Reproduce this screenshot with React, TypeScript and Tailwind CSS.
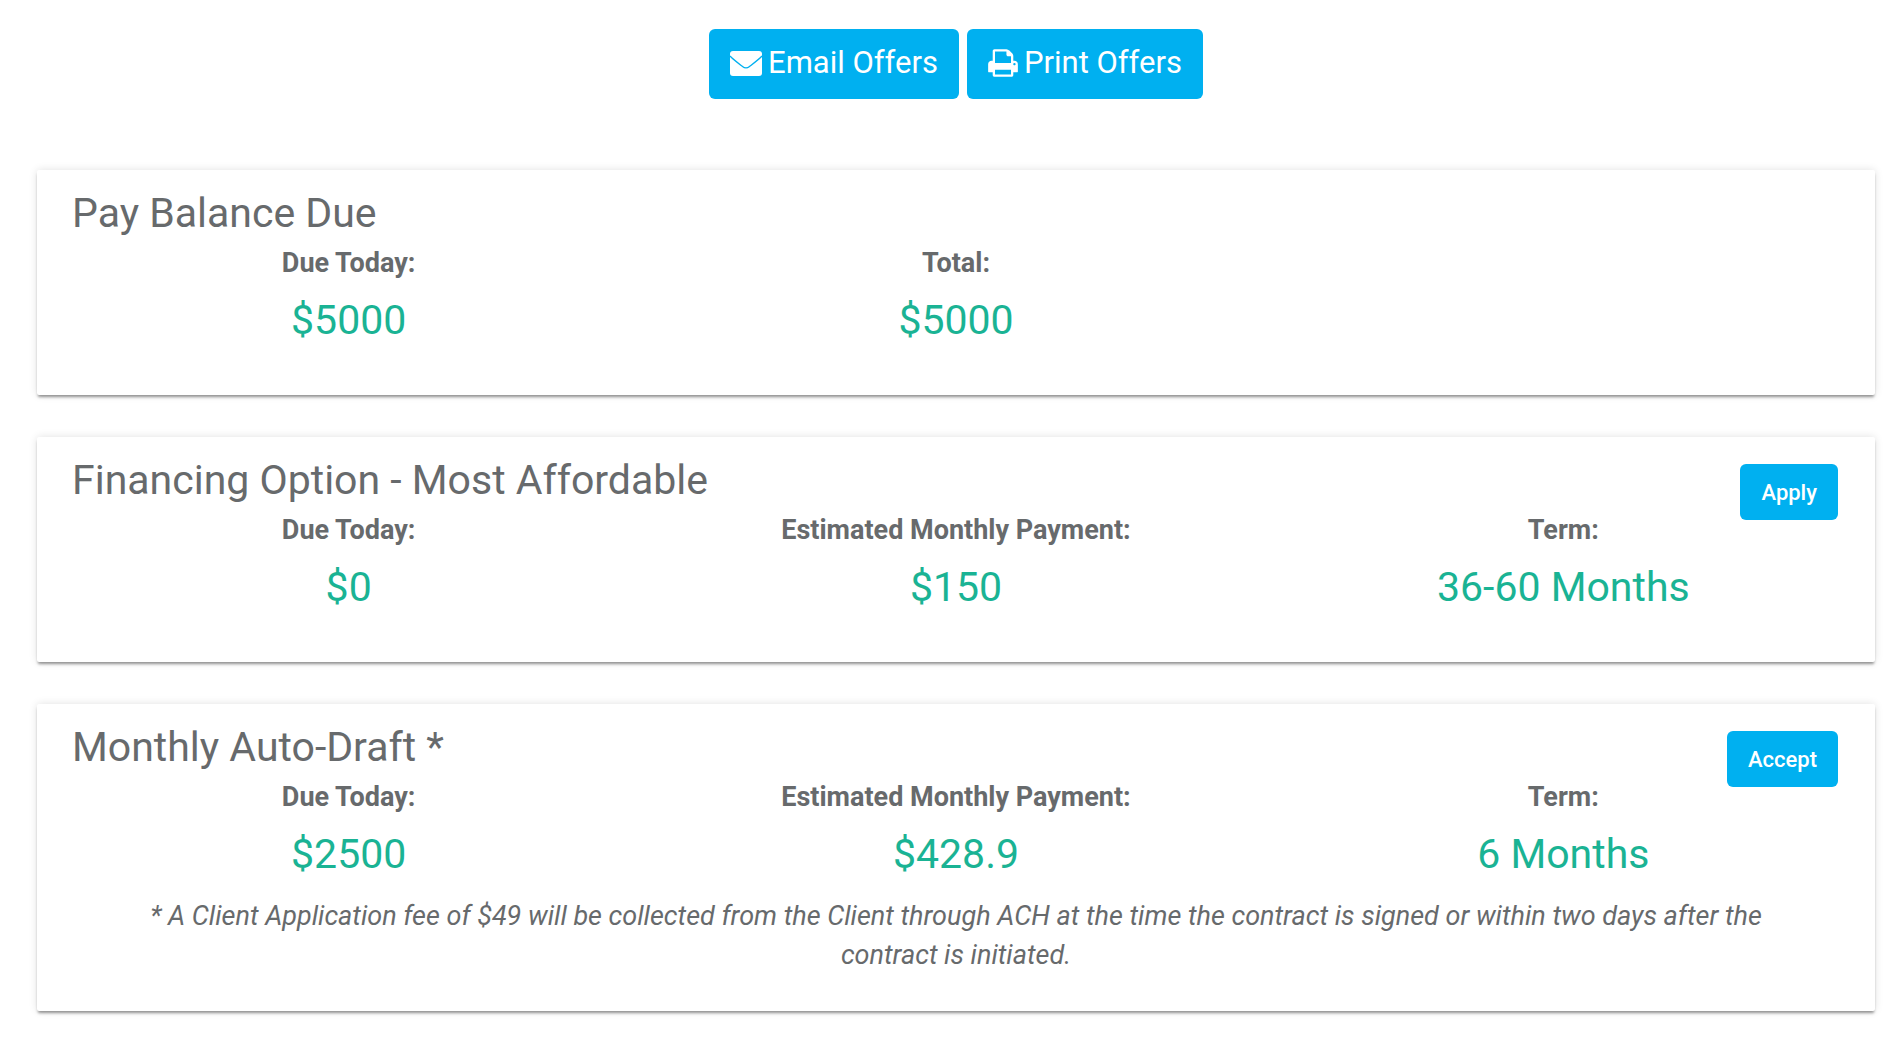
type Detail = { label: string; value: string };

type Offer = {
  title: string;
  action?: string;
  details: Detail[];
  note?: string;
};

const offers: Offer[] = [
  {
    title: "Pay Balance Due",
    details: [
      { label: "Due Today:", value: "$5000" },
      { label: "Total:", value: "$5000" },
    ],
  },
  {
    title: "Financing Option - Most Affordable",
    action: "Apply",
    details: [
      { label: "Due Today:", value: "$0" },
      { label: "Estimated Monthly Payment:", value: "$150" },
      { label: "Term:", value: "36-60 Months" },
    ],
  },
  {
    title: "Monthly Auto-Draft *",
    action: "Accept",
    details: [
      { label: "Due Today:", value: "$2500" },
      { label: "Estimated Monthly Payment:", value: "$428.9" },
      { label: "Term:", value: "6 Months" },
    ],
    note: "* A Client Application fee of $49 will be collected from the Client through ACH at the time the contract is signed or within two days after the contract is initiated.",
  },
];

function EnvelopeIcon() {
  return (
    <svg viewBox="0 0 32 25" className="h-[25px] w-8" fill="none" aria-hidden="true">
      <rect width="32" height="25" rx="3" fill="currentColor" />
      <path d="M0 5C4 9 8 12 12.500 15.500C15 17.500 17 17.500 19.500 15.500C24 12 28 9 32 5" stroke="#00b0f0" strokeWidth="1.3" />
    </svg>
  );
}

function PrintIcon() {
  return (
    <svg viewBox="64 0 1664 1792" className="h-8 w-[30px]" fill="currentColor" aria-hidden="true">
      <path d="M448 1536h896v-256h-896v256zm0-640h896v-384h-160q-40 0-68-28t-28-68v-160h-640v640zm1152 64q0-26-19-45t-45-19-45 19-19 45 19 45 45 19 45-19 19-45zm128 0v416q0 13-9.5 22.5t-22.5 9.5h-224v160q0 40-28 68t-68 28h-960q-40 0-68-28t-28-68v-160h-224q-13 0-22.5-9.5t-9.5-22.5v-416q0-79 56.5-135.5t135.5-56.5h64v-544q0-40 28-68t68-28h672q40 0 88 20t76 48l152 152q28 28 48 76t20 88v256h64q79 0 135.5 56.5t56.5 135.5z" />
    </svg>
  );
}

function OfferCard({ title, action, details, note }: Offer) {
  return (
    <section className="bg-white rounded-xs px-2 pt-[23px] pb-9 shadow-[0_3px_3px_-1px_rgba(0,0,0,0.4),0_0_8px_rgba(0,0,0,0.12)]">
      <div className="flex items-start justify-between pr-[29px] pl-[27px] h-14">
        <h2 className="text-[41px] leading-10">{title}</h2>
        {action && (
          <button type="button" className="mt-1 h-14 rounded-md bg-[#00b0f0] px-[21px] text-[22px] font-medium text-white">
            {action}
          </button>
        )}
      </div>
      <dl className="grid grid-cols-3 pb-[9px] text-center">
        {details.map((detail) => (
          <div key={detail.label}>
            <dt className="text-[27px] leading-7 font-bold">{detail.label}</dt>
            <dd className="mt-[13px] text-[41px] leading-[60px] text-[#1ab394]">{detail.value}</dd>
          </div>
        ))}
      </dl>
      {note && <p className="mt-1 px-20 text-center text-[27px] leading-[39px] italic">{note}</p>}
    </section>
  );
}

export default function App() {
  return (
    <main className="bg-white pt-[29px] pr-[27px] pb-9 pl-[37px] font-[Roboto,sans-serif] text-[#676a6c]">
      <div className="flex justify-center gap-2">
        <button type="button" className="flex h-[70px] items-center gap-1.5 rounded-md bg-[#00b0f0] px-[21px] pb-0.5 text-[31px] text-white">
          <EnvelopeIcon />
          Email Offers
        </button>
        <button type="button" className="flex h-[70px] items-center gap-1.5 rounded-md bg-[#00b0f0] px-[21px] pb-0.5 text-[31px] text-white">
          <PrintIcon />
          Print Offers
        </button>
      </div>
      <div className="mt-[71px] flex flex-col gap-[42px]">
        {offers.map((offer) => (
          <OfferCard key={offer.title} {...offer} />
        ))}
      </div>
    </main>
  );
}
